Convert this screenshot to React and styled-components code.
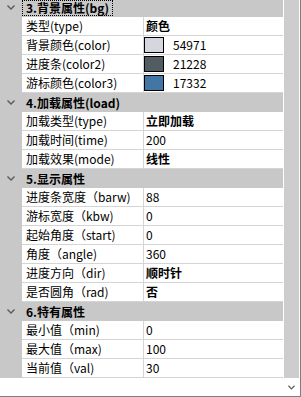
import React from "react";
import styled, { createGlobalStyle } from "styled-components";

const GlobalStyle = createGlobalStyle`
  html, body {
    margin: 0;
    padding: 0;
    background: #ffffff;
  }
  body {
    font-family: "Noto Sans CJK SC", "Noto Sans", sans-serif;
    font-size: 12px;
    color: #000;
  }
`;

const sections = [
  {
    title: "3.背景属性(bg)",
    focused: true,
    rows: [
      { name: "类型(type)", value: "颜色", bold: true },
      { name: "背景颜色(color)", value: "54971", swatch: "#d6d7de" },
      { name: "进度条(color2)", value: "21228", swatch: "#525d63" },
      { name: "游标颜色(color3)", value: "17332", swatch: "#4277a5" },
    ],
  },
  {
    title: "4.加载属性(load)",
    rows: [
      { name: "加载类型(type)", value: "立即加载", bold: true },
      { name: "加载时间(time)", value: "200" },
      { name: "加载效果(mode)", value: "线性", bold: true },
    ],
  },
  {
    title: "5.显示属性",
    rows: [
      { name: "进度条宽度（barw)", value: "88" },
      { name: "游标宽度（kbw)", value: "0" },
      { name: "起始角度（start)", value: "0" },
      { name: "角度（angle)", value: "360" },
      { name: "进度方向（dir)", value: "顺时针", bold: true },
      { name: "是否圆角（rad)", value: "否", bold: true },
    ],
  },
  {
    title: "6.特有属性",
    rows: [
      { name: "最小值（min)", value: "0" },
      { name: "最大值（max)", value: "100" },
      { name: "当前值（val)", value: "30" },
    ],
  },
];

const Frame = styled.div`
  display: flex;
  width: 301px;
  height: 397px;
  box-sizing: border-box;
  border-right: 1px solid #7f7f7f;
  border-bottom: 1px solid #7f7f7f;
  background: #fff;
`;

const Viewport = styled.div`
  width: 283px;
  height: 100%;
  overflow: hidden;
  background: #fff;
`;

// list is scrolled down by 2px in the reference
const List = styled.div`
  margin-top: -2px;
`;

const Category = styled.div`
  display: flex;
  align-items: center;
  height: 19px;
  background: #c8c8c8;
`;

const Gutter = styled.div`
  width: 22px;
  flex: none;
  align-self: stretch;
  display: flex;
  align-items: center;
  justify-content: center;
  background: #c8c8c8;
`;

const Label = styled.span`
  box-sizing: border-box;
  height: 16px;
  margin-top: 1px;
  padding: 0 3px;
  display: inline-flex;
  align-items: center;
  font-weight: bold;
  line-height: 14px;
  border: 1px dotted ${(p) => (p.$focused ? "#000" : "transparent")};
`;

const Row = styled.div`
  display: grid;
  grid-template-columns: 22px 122px 1fr;
  height: 19px;
`;

const Cell = styled.div`
  box-sizing: border-box;
  height: 19px;
  display: flex;
  align-items: center;
  border-bottom: 1px solid #d4d4d4;
  white-space: nowrap;
  overflow: hidden;
  line-height: 18px;
`;

const NameCell = styled(Cell)`
  padding-left: 4px;
  border-right: 1px solid #d4d4d4;
`;

const ValueCell = styled(Cell)`
  padding-left: ${(p) => (p.$swatch ? "0" : "2px")};
  font-weight: ${(p) => (p.$bold ? "bold" : "normal")};
`;

const Swatch = styled.span`
  box-sizing: border-box;
  width: 20px;
  height: 16px;
  margin-right: 9px;
  border: 1px solid #000;
  background: ${(p) => p.$color};
`;

const Scrollbar = styled.div`
  width: 17px;
  display: flex;
  flex-direction: column;
  background: #fff;
`;

const Thumb = styled.div`
  flex: 1;
  margin: 0 1px 1px 1px;
  background: #cdcdcd;
`;

const ArrowButton = styled.div`
  height: 17px;
  display: flex;
  align-items: center;
  justify-content: center;
`;

const Chevron = ({ color = "#5a5a5a", w = 8 }) => (
  <svg width={w} height="5" viewBox="0 0 8 5">
    <path d="M0.5 0.5 L4 4 L7.5 0.5" fill="none" stroke={color} strokeWidth="1.4" />
  </svg>
);

export default function App() {
  return (
    <>
      <GlobalStyle />
      <Frame>
        <Viewport>
          <List>
            {sections.map((s) => (
              <React.Fragment key={s.title}>
                <Category>
                  <Gutter>
                    <Chevron />
                  </Gutter>
                  <Label $focused={s.focused}>{s.title}</Label>
                </Category>
                {s.rows.map((r) => (
                  <Row key={r.name}>
                    <Gutter />
                    <NameCell>{r.name}</NameCell>
                    <ValueCell $bold={r.bold} $swatch={!!r.swatch}>
                      {r.swatch && <Swatch $color={r.swatch} />}
                      {r.value}
                    </ValueCell>
                  </Row>
                ))}
              </React.Fragment>
            ))}
          </List>
        </Viewport>
        <Scrollbar>
          <Thumb />
          <ArrowButton>
            <Chevron color="#606060" w={7} />
          </ArrowButton>
        </Scrollbar>
      </Frame>
    </>
  );
}
